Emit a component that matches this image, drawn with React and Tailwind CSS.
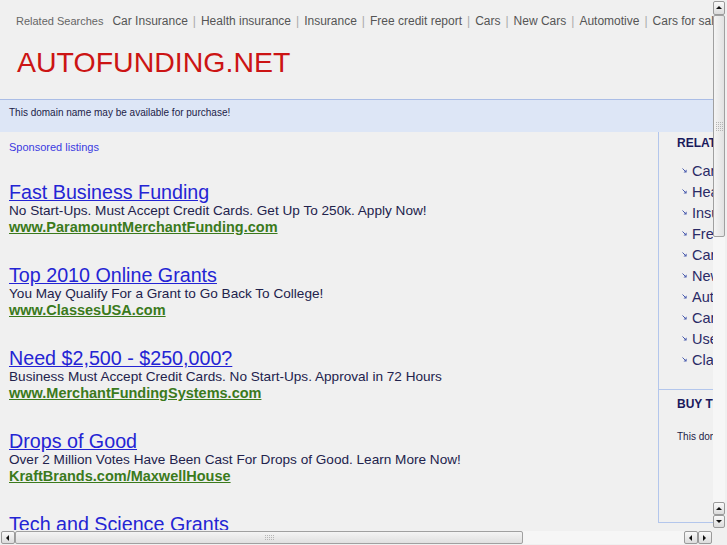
const related = [
  'Car Insurance',
  'Health insurance',
  'Insurance',
  'Free credit report',
  'Cars',
  'New Cars',
  'Automotive',
  'Cars for sale',
  'Used Cars',
  'Classic Cars',
];

const ads = [
  {
    title: 'Fast Business Funding',
    text: 'No Start-Ups. Must Accept Credit Cards. Get Up To 250k. Apply Now!',
    url: 'www.ParamountMerchantFunding.com',
  },
  {
    title: 'Top 2010 Online Grants',
    text: 'You May Qualify For a Grant to Go Back To College!',
    url: 'www.ClassesUSA.com',
  },
  {
    title: 'Need $2,500 - $250,000?',
    text: 'Business Must Accept Credit Cards. No Start-Ups. Approval in 72 Hours',
    url: 'www.MerchantFundingSystems.com',
  },
  {
    title: 'Drops of Good',
    text: 'Over 2 Million Votes Have Been Cast For Drops of Good. Learn More Now!',
    url: 'KraftBrands.com/MaxwellHouse',
  },
  {
    title: 'Tech and Science Grants',
    text: 'Find Grants For Tech and Science Degrees. Search Schools Near You.',
    url: 'www.ClassesUSA.com',
  },
];

// small triangle used on the scrollbar buttons
const Arrow = ({ dir }) => {
  const pts = {
    up: '1,5 4,2 7,5',
    down: '1,2 4,5 7,2',
    left: '5,1 2,4 5,7',
    right: '2,1 5,4 2,7',
  };
  return (
    <svg width="8" height="8" viewBox="0 0 8 8">
      <polygon points={pts[dir]} fill="#111" />
    </svg>
  );
};

const ScrollButton = ({ dir, className = '' }) => (
  <div
    className={`flex items-center justify-center border border-[#9a9a9a] rounded-[2px] bg-gradient-to-b from-[#fafafa] to-[#dcdcdc] ${className}`}
  >
    <Arrow dir={dir} />
  </div>
);

const Grip = ({ vertical }) => (
  <div className={`grid gap-[1px] ${vertical ? 'grid-cols-4' : 'grid-cols-5'}`}>
    {Array.from({ length: vertical ? 20 : 15 }).map((_, i) => (
      <div key={i} className="w-[1px] h-[1px] bg-[#b5b5b5]" />
    ))}
  </div>
);

const BulletArrow = () => (
  <svg width="5" height="5" viewBox="0 0 5 5" className="shrink-0 -mt-[3px]">
    <path d="M0.5 0.5 L3.8 3.8" stroke="#4a5cae" strokeWidth="1" />
    <polygon points="1.5,4.6 4.6,4.6 4.6,1.5" fill="#4a5cae" />
  </svg>
);

export default function App() {
  return (
    <div className="w-[727px] h-[545px] flex flex-col overflow-hidden bg-[#f0f0f0] font-['Liberation_Sans',Arial,sans-serif]">
      <div className="flex flex-1 min-h-0">
        {/* page viewport */}
        <div className="w-[713px] overflow-hidden">
          <div className="w-[900px]">
            {/* header */}
            <div className="flex items-baseline pt-[14px] pl-[16px] whitespace-nowrap leading-[15px]">
              <span className="text-[11px] text-[#666] mr-[9px]">Related Searches</span>
              {related.map((r, i) => (
                <span key={r} className="flex items-baseline text-[12px] text-[#555]">
                  {i > 0 && <span className="text-[#aaa] px-[5px]">|</span>}
                  <span>{r}</span>
                </span>
              ))}
            </div>
            <h1 className="mt-[16px] pl-[17px] text-[28.5px] leading-[34px] text-[#cc1414]">
              AUTOFUNDING.NET
            </h1>

            {/* domain band */}
            <div className="mt-[20px] w-[713px] h-[33px] border-t border-[#aabde6] bg-[#dde6f6] pl-[9px] pt-[7px]">
              <p className="text-[10px] leading-[12px] text-[#1c1c48]">
                This domain name may be available for purchase!
              </p>
            </div>

            <div className="flex">
              {/* listings */}
              <div className="w-[658px] shrink-0 pl-[9px] pt-[9px]">
                <p className="text-[11px] leading-[13px] text-[#3a3ae0]">Sponsored listings</p>
                <div className="mt-[27px] flex flex-col gap-[28px]">
                  {ads.map((ad) => (
                    <div key={ad.title} className="whitespace-nowrap">
                      <a className="block text-[19.7px] leading-[22px] text-[#2424d4] underline">
                        {ad.title}
                      </a>
                      <p className="text-[13.6px] leading-[16px] text-[#22224c]">{ad.text}</p>
                      <a className="block text-[14.5px] leading-[17px] font-bold text-[#3b7a1c] underline">
                        {ad.url}
                      </a>
                    </div>
                  ))}
                </div>
              </div>

              {/* right sidebar */}
              <div className="w-[230px] h-[391px] shrink-0 border-l border-b border-[#b3c6ec] whitespace-nowrap">
                <div className="pl-[18px] pt-[4px]">
                  <p className="text-[12px] leading-[15px] font-bold text-[#1a1a5c]">RELATED SEARCHES</p>
                  <ul className="mt-[10px] pl-[5px]">
                    {related.map((r) => (
                      <li key={r} className="flex items-center gap-[5px] text-[14.5px] leading-[21px] text-[#2a2a66]">
                        <BulletArrow />
                        <span>{r}</span>
                      </li>
                    ))}
                  </ul>
                </div>
                <div className="mt-[18px] border-t border-[#b3c6ec] pl-[18px] pt-[7px]">
                  <p className="text-[12px] leading-[15px] font-bold text-[#1a1a5c]">BUY THIS DOMAIN</p>
                  <p className="mt-[19px] text-[10px] leading-[12px] text-[#1c1c48]">
                    This domain name may be available for purchase!
                  </p>
                </div>
              </div>
            </div>
          </div>
        </div>

        {/* vertical scrollbar */}
        <div className="w-[14px] flex flex-col pt-[1px] pr-[2px] pb-[2px]">
          <ScrollButton dir="up" className="h-[14px]" />
          <div className="h-[222px] flex items-center justify-center border border-[#a0a0a0] rounded-[2px] bg-gradient-to-r from-[#f4f4f4] to-[#e2e2e2]">
            <Grip vertical />
          </div>
          <div className="flex-1 bg-[#f6f6f6]" />
          <ScrollButton dir="up" className="h-[13px]" />
          <ScrollButton dir="down" className="h-[13px]" />
        </div>
      </div>

      {/* horizontal scrollbar */}
      <div className="h-[15px] flex pt-[1px] pb-[1px] pl-[1px]">
        <ScrollButton dir="left" className="w-[14px]" />
        <div className="w-[508px] flex items-center justify-center border border-[#a0a0a0] rounded-[2px] bg-gradient-to-b from-[#f4f4f4] to-[#e0e0e0]">
          <Grip />
        </div>
        <div className="w-[161px] bg-[#f6f6f6]" />
        <ScrollButton dir="left" className="w-[14px]" />
        <ScrollButton dir="right" className="w-[14px]" />
        <div className="flex-1" />
      </div>
    </div>
  );
}
